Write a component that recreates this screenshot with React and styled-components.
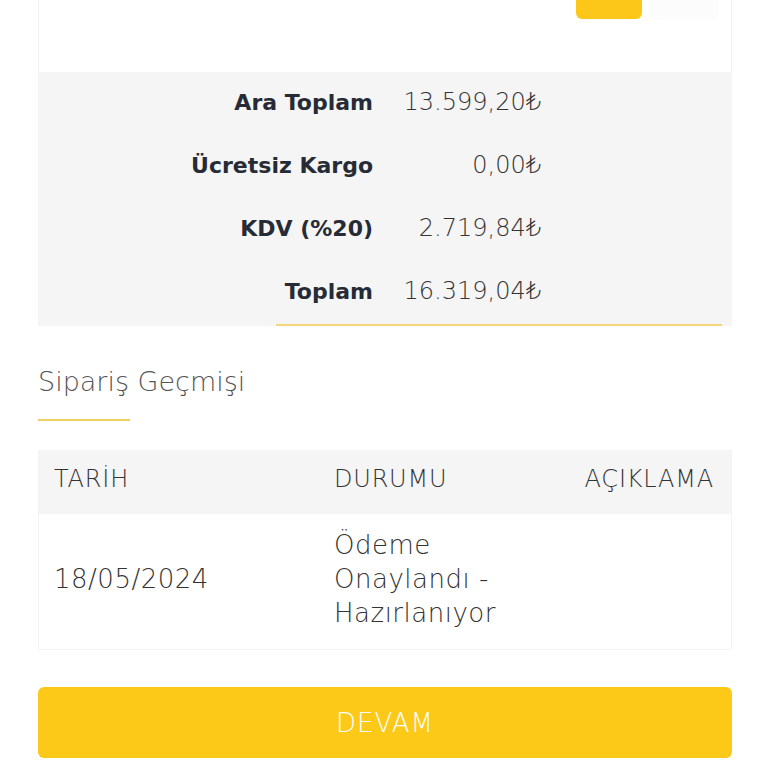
import React from "react";
import styled, { createGlobalStyle } from "styled-components";

const Global = createGlobalStyle`
  html, body { margin: 0; padding: 0; background: #fff; }
  body { font-family: "DejaVu Sans", "Noto Sans", sans-serif; color: #333; }
`;

const Page = styled.div`
  width: 694px;
  margin: 0 0 0 38px;
  overflow: hidden;
`;

const TopCard = styled.div`
  height: 72px;
  border-left: 1px solid #f2f2f2;
  border-right: 1px solid #f2f2f2;
  box-sizing: border-box;
  display: flex;
  justify-content: flex-end;
  align-items: flex-start;
  padding-right: 12px;
  gap: 7px;
`;

const ActionButton = styled.div`
  margin-top: -22px;
  width: ${(p) => p.$w}px;
  height: 41px;
  border-radius: 6px;
  background: ${(p) => (p.$primary ? "#fdc719" : "#fcfcfc")};
`;

const Totals = styled.div`
  background: #f5f5f5;
  height: 254px;
  display: flex;
  flex-direction: column;
`;

const TotalRow = styled.div`
  display: grid;
  grid-template-columns: 335px 168px 1fr;
  height: 63px;
  align-items: center;
  padding-bottom: 3px;
  box-sizing: border-box;
`;

const Label = styled.div`
  text-align: right;
  font-family: "DejaVu Sans", sans-serif;
  font-weight: 700;
  font-size: 22px;
  color: #262b36;
`;

const Value = styled.div`
  text-align: right;
  font-family: "DejaVu Sans", sans-serif;
  font-weight: 200;
  font-size: 24px;
  color: #333;
`;

const TotalLine = styled.div`
  margin: auto 10px 0 238px;
  height: 2px;
  background: #f3d57a;
`;

const SectionTitle = styled.h2`
  margin: 40px 0 0;
  font-family: "DejaVu Sans", sans-serif;
  font-weight: 200;
  font-size: 27px;
  line-height: 32px;
  color: #555;
`;

const TitleBar = styled.div`
  width: 92px;
  height: 2px;
  background: #f0d060;
  margin-top: 21px;
`;

const Table = styled.div`
  margin-top: 29px;
  border: 1px solid #f3f3f3;
  border-top: none;
`;

const Row = styled.div`
  display: grid;
  grid-template-columns: 280px 246px 1fr;
  align-items: center;
  background: ${(p) => (p.$head ? "#f5f5f5" : "#fff")};
  height: ${(p) => p.$h}px;
  padding: 0 17px 6px 15px;
  box-sizing: border-box;
`;

const Cell = styled.div`
  font-family: "DejaVu Sans", sans-serif;
  font-weight: 200;
  font-size: ${(p) => (p.$head ? 24 : 26)}px;
  letter-spacing: ${(p) => (p.$head ? 0.8 : 0.5)}px;
  line-height: 34px;
  color: #333;
  white-space: nowrap;
  text-transform: ${(p) => (p.$head ? "uppercase" : "none")};
  text-align: ${(p) => p.$align || "left"};
`;

const Devam = styled.button`
  display: block;
  width: 100%;
  margin-top: 37px;
  height: 71px;
  border: none;
  border-radius: 6px;
  background: #fdc918;
  color: #fff;
  font-family: "DejaVu Sans", sans-serif;
  font-weight: 200;
  font-size: 26px;
  letter-spacing: 1px;
`;

const totals = [
  ["Ara Toplam", "13.599,20₺"],
  ["Ücretsiz Kargo", "0,00₺"],
  ["KDV (%20)", "2.719,84₺"],
  ["Toplam", "16.319,04₺"],
];

export default function App() {
  return (
    <>
      <Global />
      <Page>
        <TopCard>
          <ActionButton $primary $w={66} />
          <ActionButton $w={70} />
        </TopCard>
        <Totals>
          {totals.map(([l, v]) => (
            <TotalRow key={l}>
              <Label>{l}</Label>
              <Value>{v}</Value>
            </TotalRow>
          ))}
          <TotalLine />
        </Totals>
        <SectionTitle>Sipariş Geçmişi</SectionTitle>
        <TitleBar />
        <Table>
          <Row $head $h={64}>
            <Cell $head>Tarİh</Cell>
            <Cell $head>Durumu</Cell>
            <Cell $head $align="right">Açıklama</Cell>
          </Row>
          <Row $h={135}>
            <Cell>18/05/2024</Cell>
            <Cell>
              Ödeme
              <br />
              Onaylandı -
              <br />
              Hazırlanıyor
            </Cell>
            <Cell />
          </Row>
        </Table>
        <Devam>DEVAM</Devam>
      </Page>
    </>
  );
}
